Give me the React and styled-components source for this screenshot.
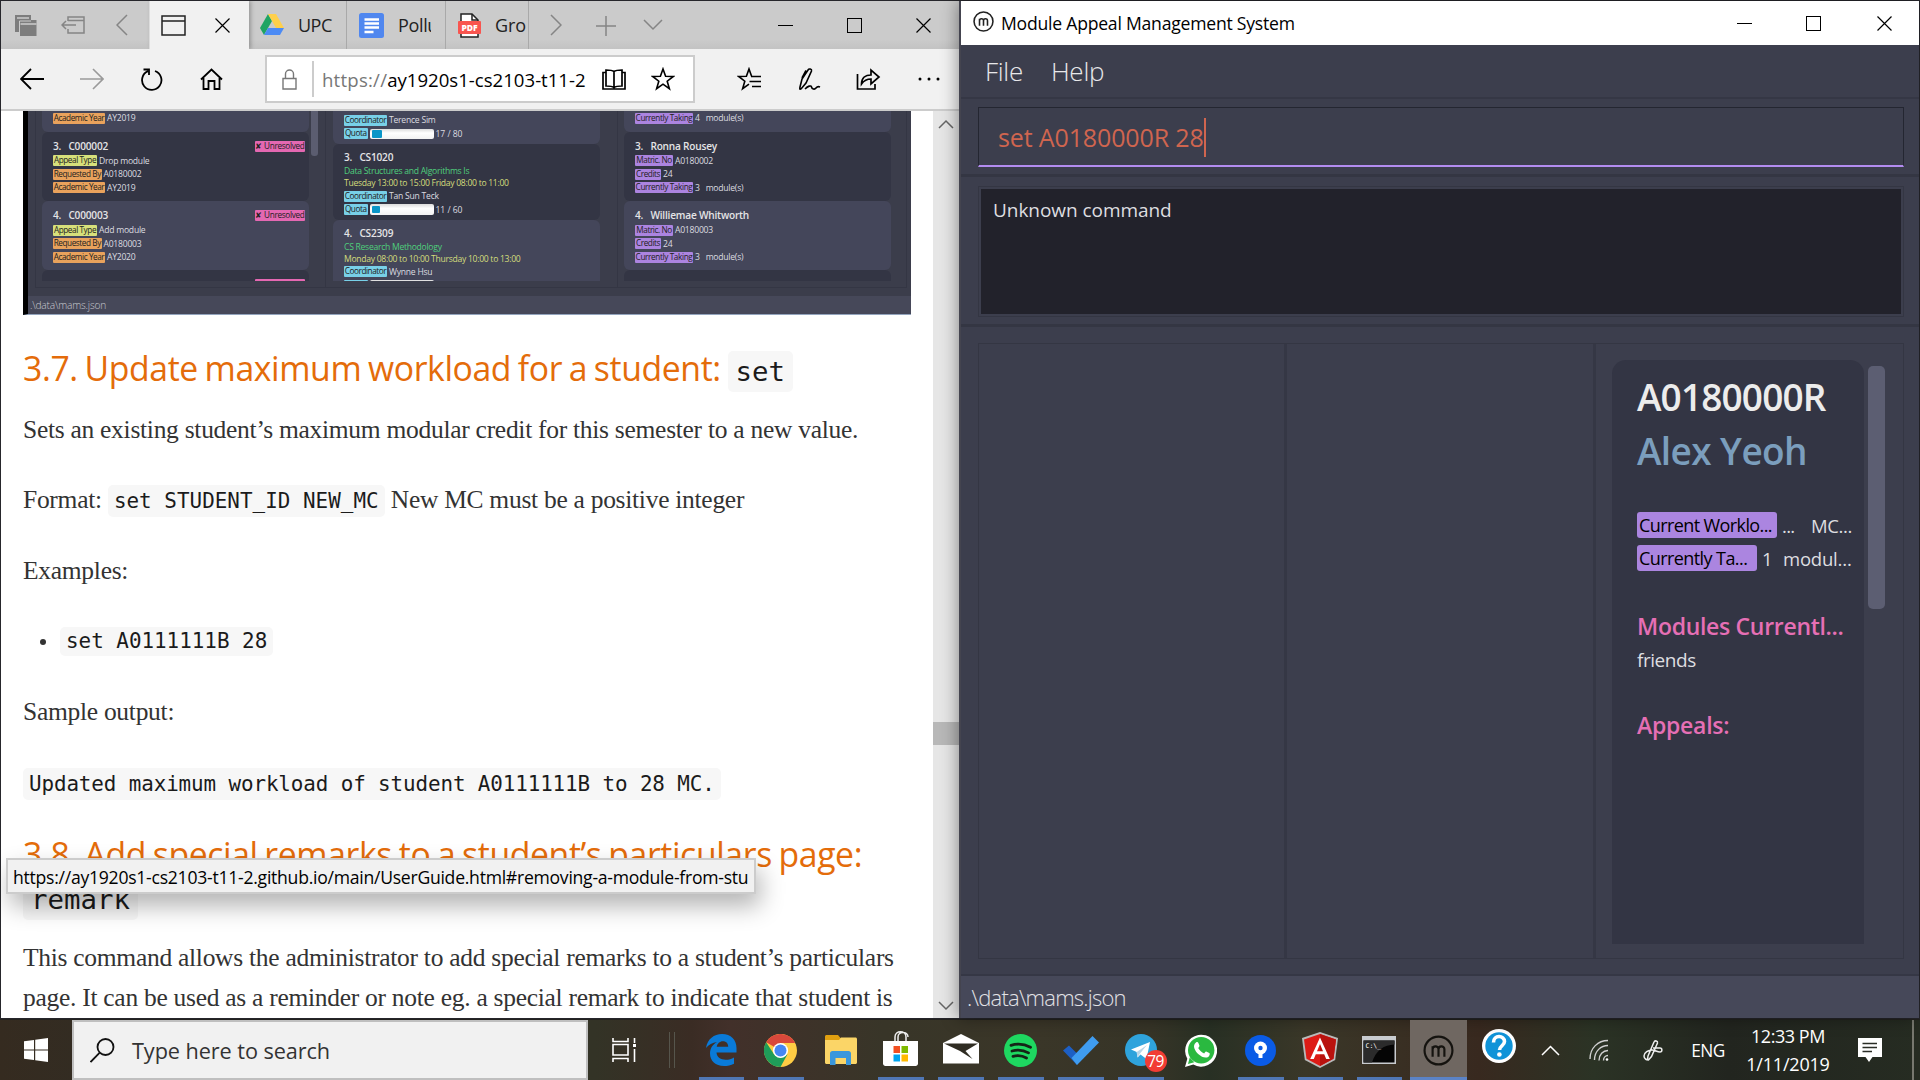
import React from "react";
import styled, { createGlobalStyle, css } from "styled-components";

const ui = `"Open Sans", "Noto Sans", sans-serif`;
const serif = `"Liberation Serif", serif`;
const mono = `"DejaVu Sans Mono", monospace`;

const Global = createGlobalStyle`
  * { box-sizing: border-box; }
  body { margin: 0; overflow: hidden; background: #1f1f24; font-family: ${ui}; }
  svg { display: block; flex: none; }
`;

/* ---------- shared ---------- */
const Desktop = styled.div`
  width: 1920px;
  height: 1080px;
  display: grid;
  grid-template: 1019px 61px / 959px 961px;
  background: #26262b;
  overflow: hidden;
`;
const Text = styled.span`
  font-family: ${ui};
  font-size: ${(p) => p.$size}px;
  font-weight: ${(p) => p.$weight || 400};
  letter-spacing: ${(p) => p.$ls || 0}px;
  line-height: ${(p) => (p.$lh ? p.$lh + "px" : "normal")};
  color: ${(p) => p.$color || "#000"};
  white-space: pre;
  flex: none;
`;
const Slot = styled.div`
  width: ${(p) => p.$w}px;
  height: 100%;
  display: flex;
  align-items: center;
  justify-content: ${(p) => (p.$start ? "flex-start" : "center")};
  flex: none;
`;
const Stroke = ({ w, h, c = "#000", s = 1.5, children, ...r }) => (
  <svg width={w} height={h} viewBox={`0 0 ${w} ${h}`} fill="none" stroke={c} strokeWidth={s} {...r}>
    {children}
  </svg>
);

/* ---------- browser ---------- */
const Browser = styled.section`
  margin: 1px 0 1px 1px;
  background: #fff;
  display: flex;
  flex-direction: column;
  min-width: 0;
  min-height: 0;
  overflow: hidden;
  position: relative;
`;
const TabBar = styled.div`
  height: 48px;
  flex: none;
  display: flex;
  background: linear-gradient(#cbcbcb 80%, #c3c3c3);
`;
const ActiveTab = styled.div`
  width: 100px;
  background: #f1f1f1;
  display: flex;
  align-items: center;
  padding-left: 11px;
  gap: 29px;
  border-left: 1px solid #ddd;
  box-shadow: 2px 0 4px rgba(0, 0, 0, 0.25);
`;
const Tab = styled.div`
  width: ${(p) => p.$w}px;
  padding-left: ${(p) => p.$pad}px;
  border-right: 1px solid #a9a9a9;
  display: flex;
  align-items: center;
  gap: 14px;
  overflow: hidden;
`;
const TabLabel = styled.div`
  width: ${(p) => p.$w}px;
  overflow: hidden;
  display: flex;
  flex: none;
`;
const ToolBar = styled.div`
  height: 62px;
  flex: none;
  display: flex;
  background: #f1f1f1;
  border-bottom: 2px solid #ccc;
`;
const Address = styled.div`
  width: 430px;
  height: 48px;
  margin: 6px 28px 0 15px;
  border: 2px solid #ccc;
  background: #fff;
  display: flex;
  align-items: center;
  flex: none;
`;
const AddressRule = styled.div`
  width: 2px;
  height: 36px;
  background: #ccc;
  margin-right: 8px;
`;
const Page = styled.div`
  flex: 1;
  display: flex;
  min-height: 0;
`;
const Article = styled.article`
  width: 932px;
  padding-left: 22px;
  overflow: hidden;
  flex: none;
`;
const ScrollBar = styled.div`
  width: 26px;
  background: #e6e6e6;
  display: flex;
  flex-direction: column;
  align-items: center;
  padding: 8px 0 7px;
`;
const ScrollThumb = styled.div`
  width: 26px;
  height: 23px;
  background: #b8b8b8;
  margin: 593px 0 auto;
`;
const H3 = styled.h3`
  margin: ${(p) => p.$top}px 0 20.7px;
  font: 400 33.75px/42px ${ui};
  letter-spacing: -0.38px;
  word-spacing: -1.7px;
  color: #e46c0a;
  white-space: nowrap;
`;
const Code = styled.code`
  font: ${(p) => (p.$big ? 27.4 : 20.9)}px/1 ${mono};
  letter-spacing: ${(p) => (p.$big ? 0 : p.$ls ?? 0)}px;
  word-spacing: 0;
  color: #1b1b1b;
  background: #f7f7f7;
  border-radius: 5px;
  padding: ${(p) => (p.$big ? "5px 8px" : "4px 6px 4px")};
`;
const P = styled.p`
  margin: 0 0 30.2px;
  font: 25.5px/40.4px ${serif};
  letter-spacing: -0.28px;
  color: #333;
  white-space: nowrap;
`;
const Bullet = styled(P)`
  height: 40.4px;
  display: flex;
  align-items: center;
  gap: 14px;
  padding-left: 17px;
  &::before {
    content: "";
    width: 6px;
    height: 6px;
    border-radius: 50%;
    background: #333;
  }
`;
const LinkStatus = styled.div`
  position: absolute;
  left: 5px;
  top: 857px;
  width: 750px;
  height: 36px;
  border: 2px solid #ccc;
  background: #f1f1f1;
  box-shadow: 4px 12px 24px rgba(0, 0, 0, 0.3);
  display: flex;
  align-items: center;
  padding: 2px 5px 0 5px;
`;
const LinkClip = styled.div`
  overflow: hidden;
  display: flex;
`;

/* ---------- guide illustration ---------- */
const Shot = styled.figure`
  margin: 0;
  width: 888px;
  height: 204px;
  border-left: 5px solid #000;
  border-bottom: 1px solid #93a4bd;
  background: #3b3d4b;
  display: flex;
  flex-direction: column;
`;
const ShotLists = styled.div`
  height: 177px;
  margin: 0 4px 8px 7px;
  border: 1px solid #343644;
  border-top: 0;
  display: grid;
  grid-template-columns: 290px 292px 1fr;
`;
const ShotPane = styled.div`
  height: 170px;
  overflow: hidden;
  display: flex;
  padding-left: ${(p) => p.$pad}px;
  gap: 2px;
`;
const ShotColumn = styled.div`
  border-right: ${(p) => (p.$last ? 0 : 1)}px solid #343644;
`;
const ShotStack = styled.div`
  width: 267px;
  display: flex;
  flex-direction: column;
`;
const ShotThumb = styled.div`
  width: 7px;
  height: 45px;
  border-radius: 0 0 3px 3px;
  background: #5b5d70;
`;
const ShotCard = styled.div`
  height: ${(p) => p.$h}px;
  flex: none;
  border-radius: 6px;
  background: ${(p) => (p.$dark ? "#333544" : "#44465a")};
  padding: ${(p) => p.$pt ?? 7}px 4px 0 11px;
  display: flex;
  flex-direction: column;
`;
const ShotCut = styled(ShotCard)`
  border-radius: 0 0 6px 6px;
`;
const ShotTitle = styled.div`
  height: 16px;
  display: flex;
  justify-content: space-between;
  align-items: center;
  flex: none;
`;
const ShotLine = styled.div`
  height: ${(p) => p.$h ?? 13.6}px;
  display: flex;
  align-items: center;
  gap: 2px;
  flex: none;
`;
const chip = { lime: "#d7e07b", orange: "#e9a25c", blue: "#78d0e8", violet: "#ac84e0", pink: "#e468b2" };
const Chip = styled.span`
  height: 11px;
  width: ${(p) => p.$w}px;
  border-radius: 1px;
  background: ${(p) => chip[p.$c]};
  font: 8.2px/10.6px ${ui};
  letter-spacing: ${(p) => p.$ls ?? -0.42}px;
  color: #222;
  display: flex;
  justify-content: center;
  white-space: pre;
  flex: none;
`;
const Quota = styled.div`
  width: 64px;
  height: 10.5px;
  border-radius: 2px;
  background: linear-gradient(#dcdcdc, #fff 40%, #f2f2f2);
  padding: 1.5px 2px;
`;
const QuotaFill = styled.div`
  width: ${(p) => p.$w}px;
  height: 7.5px;
  border-radius: 1px;
  background: #0a96c8;
`;
const ShotStatus = styled.div`
  height: 18px;
  background: #464859;
  padding-left: 2px;
  display: flex;
  align-items: center;
`;

const S = (p) => <Text $size={8.6} $color="#dcdce0" $ls={-0.24} {...p} />;
const Head = ({ n, t }) => (
  <Text $size={10.1} $weight={600} $color="#e4e4e6" $ls={-0.2}>{`${n}.   ${t}`}</Text>
);
const Appeal = ({ n, id, type, by, year, dark }) => (
  <ShotCard $h={69.3} $dark={dark} $pt={6.5}>
    <ShotTitle>
      <Head n={n} t={id} />
      <Chip $c="pink" $w={50} $ls={-0.3}>✘ Unresolved</Chip>
    </ShotTitle>
    <ShotLine><Chip $c="lime" $w={44}>Appeal Type</Chip><S>{type}</S></ShotLine>
    <ShotLine><Chip $c="orange" $w={48.5}>Requested By</Chip><S>{by}</S></ShotLine>
    <ShotLine><Chip $c="orange" $w={52}>Academic Year</Chip><S>{year}</S></ShotLine>
  </ShotCard>
);
const Module = ({ n, id, name, slot, who, fill, quota, dark }) => (
  <ShotCard $h={75.8} $dark={dark} $pt={4.8}>
    <ShotTitle><Head n={n} t={id} /></ShotTitle>
    <ShotLine $h={12.5}><S $color="#4fcf7c" $ls={-0.28}>{name}</S></ShotLine>
    <ShotLine $h={12}><S $color="#d3dc7c" $ls={-0.29}>{slot}</S></ShotLine>
    <ShotLine><Chip $c="blue" $w={43}>Coordinator</Chip><S>{who}</S></ShotLine>
    <ShotLine>
      <Chip $c="blue" $w={23.5}>Quota</Chip>
      <Quota><QuotaFill $w={fill} /></Quota>
      <S $ls={-0.05}>{quota}</S>
    </ShotLine>
  </ShotCard>
);
const Student = ({ n, name, id, taking, dark }) => (
  <ShotCard $h={69.3} $dark={dark} $pt={6.5}>
    <ShotTitle><Head n={n} t={name} /></ShotTitle>
    <ShotLine><Chip $c="violet" $w={38}>Matric. No</Chip><S>{id}</S></ShotLine>
    <ShotLine><Chip $c="violet" $w={26}>Credits</Chip><S>24</S></ShotLine>
    <ShotLine><Chip $c="violet" $w={58} $ls={-0.36}>Currently Taking</Chip><S>{`${taking}   module(s)`}</S></ShotLine>
  </ShotCard>
);

const Illustration = () => (
  <Shot>
    <ShotLists>
      <ShotColumn>
        <ShotPane $pad={6}>
          <ShotStack>
            <ShotCut $h={20.5} $pt={0.5}>
              <ShotLine><Chip $c="orange" $w={52}>Academic Year</Chip><S>AY2019</S></ShotLine>
            </ShotCut>
            <Appeal n={3} id="C000002" type="Drop module" by="A0180002" year="AY2019" dark />
            <Appeal n={4} id="C000003" type="Add module" by="A0180003" year="AY2020" />
            <ShotCard $h={69} $dark $pt={6}>
              <ShotTitle><span /><Chip $c="pink" $w={50} /></ShotTitle>
            </ShotCard>
          </ShotStack>
          <ShotThumb />
        </ShotPane>
      </ShotColumn>
      <ShotColumn>
        <ShotPane $pad={7}>
          <ShotStack>
            <ShotCut $h={33} $pt={2.4}>
              <ShotLine><Chip $c="blue" $w={43}>Coordinator</Chip><S>Terence Sim</S></ShotLine>
              <ShotLine>
                <Chip $c="blue" $w={23.5}>Quota</Chip>
                <Quota><QuotaFill $w={10} /></Quota>
                <S $ls={-0.05}>17 / 80</S>
              </ShotLine>
            </ShotCut>
            <Module n={3} id="CS1020" name="Data Structures and Algorithms Is" slot="Tuesday 13:00 to 15:00 Friday 08:00 to 11:00" who="Tan Sun Teck" fill={8} quota="11 / 60" dark />
            <ShotCard $h={75.8} $pt={4.8}>
              <ShotTitle><Head n={4} t="CS2309" /></ShotTitle>
              <ShotLine $h={12.5}><S $color="#4fcf7c" $ls={-0.28}>CS Research Methodology</S></ShotLine>
              <ShotLine $h={12}><S $color="#d3dc7c" $ls={-0.29}>Monday 08:00 to 10:00 Thursday 10:00 to 13:00</S></ShotLine>
              <ShotLine><Chip $c="blue" $w={43}>Coordinator</Chip><S>Wynne Hsu</S></ShotLine>
              <ShotLine><Chip $c="blue" $w={23.5} /><Quota /></ShotLine>
            </ShotCard>
          </ShotStack>
        </ShotPane>
      </ShotColumn>
      <ShotColumn $last>
        <ShotPane $pad={6}>
          <ShotStack>
            <ShotCut $h={20.5} $pt={0.5}>
              <ShotLine><Chip $c="violet" $w={58} $ls={-0.36}>Currently Taking</Chip><S>{"4   module(s)"}</S></ShotLine>
            </ShotCut>
            <Student n={3} name="Ronna Rousey" id="A0180002" taking="3" dark />
            <Student n={4} name="Williemae Whitworth" id="A0180003" taking="3" />
            <ShotCard $h={69} $dark />
          </ShotStack>
        </ShotPane>
      </ShotColumn>
    </ShotLists>
    <ShotStatus><Text $size={10.2} $weight={300} $color="#c9c9d0" $ls={-0.2}>.\data\mams.json</Text></ShotStatus>
  </Shot>
);

/* ---------- window buttons ---------- */
const Min = () => <Stroke w={15} h={15} s={1.3} shapeRendering="crispEdges"><path d="M0 7.5h15" /></Stroke>;
const Max = () => <Stroke w={15} h={15} s={1} shapeRendering="crispEdges"><path d="M.5 .5h14v14h-14z" /></Stroke>;
const Close = ({ w = 15 }) => <Stroke w={w} h={w} s={1.2}><path d={`M.5 .5L${w - 0.5} ${w - 0.5}M${w - 0.5} .5L.5 ${w - 0.5}`} /></Stroke>;

const BrowserWindow = () => (
  <Browser>
    <TabBar>
      <Slot $w={49}>
        <svg width="22" height="23" viewBox="0 0 22 23" fill="#7d7d7d">
          <path d="M0 1h16v5h5.500v16H5v-4H0z" />
          <path d="M2 4h12M5.500 10h16" stroke="#cbcbcb" strokeWidth="1.400" fill="none" />
          <path d="M4.500 18V7h11.500" stroke="#cbcbcb" strokeWidth="1" fill="none" />
        </svg>
      </Slot>
      <Slot $w={45}>
        <Stroke w={24} h={20} c="#858585"><path d="M7 6V2h16v16H7v-4M7 5.500h16M1 10h14M5 6l-4 4 4 4" /></Stroke>
      </Slot>
      <Slot $w={54}><Stroke w={12} h={22} c="#858585"><path d="M11 1L1 11l10 10" /></Stroke></Slot>
      <ActiveTab>
        <Stroke w={25} h={21} c="#222"><path d="M1 1h23v19H1zM1 6h23" /></Stroke>
        <Close />
      </ActiveTab>
      <Tab $w={98} $pad={11}>
        <svg width="24" height="22" viewBox="0 0 24 22">
          <path d="M8 0L0 14l4 7 8-14z" fill="#1fa463" />
          <path d="M8 0h8l8 14h-8z" fill="#ffd04b" />
          <path d="M8 14h16l-4 7H4z" fill="#4c8bf5" />
        </svg>
        <Text $size={18} $ls={-0.5} $color="#222">UPC</Text>
      </Tab>
      <Tab $w={99} $pad={12}>
        <svg width="25" height="25" viewBox="0 0 25 25">
          <rect width="25" height="25" rx="2.500" fill="#5087ef" />
          <path d="M5.500 6.500h14.500M5.500 10.500h14.500M5.500 14.500h14.500M5.500 19h9" stroke="#fff" strokeWidth="2.400" />
        </svg>
        <TabLabel $w={33}><Text $size={18} $ls={-0.35} $color="#222">Pollu</Text></TabLabel>
      </Tab>
      <Tab $w={83} $pad={12}>
        <svg width="23" height="25" viewBox="0 0 23 25">
          <path d="M3 1h11l6 6v17H3z" fill="#fff" stroke="#222" strokeWidth="1.500" />
          <path d="M14 1v6h6" fill="none" stroke="#222" strokeWidth="1.500" />
          <rect y="8" width="23" height="13" rx="1" fill="#f8554f" />
          <text x="11.500" y="17.800" textAnchor="middle" fontFamily="Open Sans" fontWeight="800" fontSize="8.500" fill="#fff">PDF</text>
        </svg>
        <TabLabel $w={33}><Text $size={18} $ls={-0.1} $color="#222">Gro</Text></TabLabel>
      </Tab>
      <Slot $w={53}><Stroke w={12} h={22} c="#858585"><path d="M1 1l10 10L1 21" /></Stroke></Slot>
      <Slot $w={48}><Stroke w={20} h={22} c="#858585"><path d="M10 2v20M0 12h20" /></Stroke></Slot>
      <Slot $w={46}><Stroke w={20} h={12} c="#858585"><path d="M1 1l9 9 9-9" /></Stroke></Slot>
      <Slot $w={75} />
      <Slot $w={69}><Min /></Slot>
      <Slot $w={69}><Max /></Slot>
      <Slot $w={69}><Close /></Slot>
    </TabBar>
    <ToolBar>
      <Slot $w={62}><Stroke w={24} h={22} s={1.8}><path d="M1 11h23M11 1L1 11l10 10" /></Stroke></Slot>
      <Slot $w={58}><Stroke w={24} h={22} s={1.6} c="#9a9a9a"><path d="M0 11h23M13 1l10 10-10 10" /></Stroke></Slot>
      <Slot $w={61}><Stroke w={22} h={23} s={1.8}><path d="M7 3.200A9.700 9.700 0 1 0 14 3M2.500 1.500H8v5.500" /></Stroke></Slot>
      <Slot $w={58}><Stroke w={23} h={22} s={1.8}><path d="M1 11.500L11.500 1.500 22 11.500M3.500 10v11h5v-8h6v8h5V10" /></Stroke></Slot>
      <Slot $w={10} />
      <Address>
        <Slot $w={45}>
          <Stroke w={15} h={21} c="#777" s={1.4}><path d="M1 9.500h13V20H1zM3.500 9.500V5a4 4 0 0 1 8 0v4.500" /></Stroke>
        </Slot>
        <AddressRule />
        <Slot $w={268} $start>
          <Text $size={18.6} $ls={0.22} $color="#777">https://</Text>
          <Text $size={18.6} $ls={0}>ay1920s1-cs2103-t11-2</Text>
        </Slot>
        <Slot $w={48}>
          <Stroke w={24} h={21} s={1.7}><path d="M12 2.500v16M12 2.500C10 1 7 1 4 1v16c3 0 6 0 8 1.500 2-1.500 5-1.500 8-1.500V1c-3 0-6 0-8 1.500M4 3.500H1V20h22V3.500h-3" /></Stroke>
        </Slot>
        <Slot $w={49}>
          <Stroke w={24} h={24} s={1.6}><path d="M12 2l2.600 7.300 7.700.2-6.100 4.700 2.200 7.500L12 17.200l-6.400 4.500 2.200-7.500L1.700 9.500l7.700-.2z" /></Stroke>
        </Slot>
      </Address>
      <Slot $w={52}>
        <Stroke w={25} h={24} s={1.6}><path d="M12 17.200l-6.400 4.500 2.200-7.500L1.700 9.500l7.700-.2L12 2l2.600 7.300M14 9.500h10M12.500 14.500H24M15 19.500h9" /></Stroke>
      </Slot>
      <Slot $w={67}>
        <Stroke w={24} h={25} s={1.6}><path d="M3 20L5 12 11 3c1-1.800 4-1 3.500 1L9 16l-5 6c-1 .8-1.500 0-1-2zM9 3.500L5 11M8 22c3-3 6-4 6.500-2s3 3 4.500 1 3-1.500 4-1" /></Stroke>
      </Slot>
      <Slot $w={52}>
        <Stroke w={25} h={22} s={1.7}><path d="M1.500 6v15H19v-5M5.500 16c0-6 4-9 9.500-9V2l8 7-8 7v-5c-4 0-7 1.500-9.500 5z" /></Stroke>
      </Slot>
      <Slot $w={69}>
        <svg width="24" height="4"><circle cx="3" cy="2" r="1.500" /><circle cx="12" cy="2" r="1.500" /><circle cx="21" cy="2" r="1.500" /></svg>
      </Slot>
    </ToolBar>
    <Page>
      <Article>
        <Illustration />
        <H3 $top={32}>3.7. Update maximum workload for a student: <Code $big>set</Code></H3>
        <P>Sets an existing student’s maximum modular credit for this semester to a new value.</P>
        <P>Format: <Code $ls={0.03}>set STUDENT_ID NEW_MC</Code> New MC must be a positive integer</P>
        <P>Examples:</P>
        <Bullet as="div"><Code>set A0111111B 28</Code></Bullet>
        <P>Sample output:</P>
        <P><Code $ls={-0.11}>Updated maximum workload of student A0111111B to 28 MC.</Code></P>
        <H3 $top={30}>3.8. Add special remarks to a student’s particulars page:<br /><Code $big>remark</Code></H3>
        <P>This command allows the administrator to add special remarks to a student’s particulars<br />page. It can be used as a reminder or note eg. a special remark to indicate that student is</P>
      </Article>
      <ScrollBar>
        <Stroke w={16} h={10} c="#666"><path d="M1 9l7-7 7 7" /></Stroke>
        <ScrollThumb />
        <Stroke w={16} h={10} c="#666"><path d="M1 1l7 7 7-7" /></Stroke>
      </ScrollBar>
    </Page>
    <LinkStatus>
      <LinkClip><Text $size={17.6} $ls={-0.26}>https://ay1920s1-cs2103-t11-2.github.io/main/UserGuide.html#removing-a-module-from-stu</Text></LinkClip>
    </LinkStatus>
  </Browser>
);

/* ---------- MAMS application ---------- */
const Mams = styled.section`
  margin: 1px 1px 1px 2px;
  background: #3c3e4d;
  display: flex;
  flex-direction: column;
  min-height: 0;
  position: relative;
  box-shadow: -2px 0 0 #44444f, -3px 0 16px rgba(0, 0, 0, 0.4);
`;
const TitleBar = styled.header`
  height: 44px;
  flex: none;
  background: #fff;
  display: flex;
  align-items: center;
  padding-left: 12px;
`;
const TitleIcon = styled.div`
  padding-bottom: 3px;
`;
const TitleText = styled.div`
  flex: 1;
  padding: 0 0 0 7px;
  display: flex;
`;
const MenuBar = styled.nav`
  height: 54px;
  flex: none;
  display: flex;
  align-items: center;
  gap: 28px;
  padding: 0 0 1px 24px;
  border-bottom: 2px solid #353745;
`;
const CommandPane = styled.div`
  height: 78px;
  flex: none;
  padding: 8px 15px 0 17px;
  border-bottom: 3px solid #343643;
`;
const CommandField = styled.div`
  height: 60px;
  border: 1px solid #242631;
  border-bottom: 2px solid #b38cf0;
  display: flex;
  align-items: center;
  padding: 1px 0 0 19px;
`;
const Caret = styled.div`
  width: 2px;
  height: 39px;
  background: #d0654f;
`;
const ResultPane = styled.div`
  height: 150px;
  flex: none;
  padding: 9px 15px 0 17px;
  border-bottom: 3px solid #343643;
`;
const ResultBox = styled.div`
  height: 131px;
  border: 1px solid #343643;
  padding: 2px;
`;
const Result = styled.div`
  height: 125px;
  background: #22222b;
  padding: 8px 12px;
`;
const Panels = styled.div`
  height: 616px;
  flex: none;
  margin: 16px 15px 0 17px;
  border: 1px solid #343643;
  display: grid;
  grid-template-columns: 308px 309px 1fr;
`;
const Panel = styled.div`
  border-right: ${(p) => (p.$last ? 0 : 3)}px solid #353745;
  display: flex;
`;
const Card = styled.div`
  width: 252px;
  height: 584px;
  margin: 16px 4px 0 16px;
  border-radius: 14px 14px 0 0;
  background: #333544;
  padding: 11px 0 0 25px;
  display: flex;
  flex-direction: column;
`;
const CardLine = styled.div`
  height: ${(p) => p.$h}px;
  margin-top: ${(p) => p.$mt || 0}px;
  display: flex;
  align-items: center;
  flex: none;
`;
const Badge = styled.div`
  width: ${(p) => p.$w}px;
  height: 26px;
  border-radius: 3px;
  background: #ab85e0;
  padding-left: 2px;
  margin-right: ${(p) => p.$mr}px;
  display: flex;
  align-items: center;
`;
const CardValue = styled.div`
  width: ${(p) => p.$w}px;
  display: flex;
`;
const PanelThumb = styled.div`
  width: 17px;
  height: 243px;
  margin-top: 22px;
  border-radius: 5px;
  background: #5c5e72;
`;
const StatusBar = styled.footer`
  flex: 1;
  margin-top: 15px;
  border-top: 2px solid #353745;
  background: #464859;
  padding: 0 0 0 6px;
  display: flex;
  align-items: center;
`;
const MLogo = ({ size, color = "#222", s = 1.6 }) => (
  <Stroke w={20} h={20} c={color} s={s} width={size} height={size}>
    <circle cx="10" cy="10" r="9" />
    <path d="M6.200 14V7.300M6.200 9.200c0-2.300 3.800-2.600 3.800 0V14M10 9.200c0-2.300 3.800-2.600 3.800 0V14" />
  </Stroke>
);

const MamsWindow = () => (
  <Mams>
    <TitleBar>
      <TitleIcon><MLogo size={21} s={1.5} /></TitleIcon>
      <TitleText><Text $size={17.6} $ls={-0.23}>Module Appeal Management System</Text></TitleText>
      <Slot $w={66}><Min /></Slot>
      <Slot $w={72}><Max /></Slot>
      <Slot $w={70}><Close /></Slot>
    </TitleBar>
    <MenuBar>
      <Text $size={26} $weight={300} $ls={-0.3} $color="#e8e8ea">File</Text>
      <Text $size={26} $weight={300} $ls={-0.25} $color="#e8e8ea">Help</Text>
    </MenuBar>
    <CommandPane>
      <CommandField>
        <Text $size={25} $ls={-0.13} $color="#d0654f">set A0180000R 28</Text>
        <Caret />
      </CommandField>
    </CommandPane>
    <ResultPane>
      <ResultBox><Result><Text $size={19} $ls={-0.05} $color="#dedee0">Unknown command</Text></Result></ResultBox>
    </ResultPane>
    <Panels>
      <Panel />
      <Panel />
      <Panel $last>
        <Card>
          <CardLine $h={50}><Text $size={37} $weight={600} $ls={-0.85} $color="#ececec">A0180000R</Text></CardLine>
          <CardLine $h={50} $mt={4}><Text $size={37} $weight={600} $ls={-0.6} $color="#7b9ebd">Alex Yeoh</Text></CardLine>
          <CardLine $h={26} $mt={37}>
            <Badge $w={140} $mr={5}><Text $size={18} $ls={-0.6}>Current Worklo...</Text></Badge>
            <CardValue $w={29}><Text $size={18.5} $ls={-0.7} $color="#dedee0">...</Text></CardValue>
            <Text $size={18.5} $ls={-0.4} $color="#dedee0">MC...</Text>
          </CardLine>
          <CardLine $h={26} $mt={7}>
            <Badge $w={120} $mr={5}><Text $size={18} $ls={-0.58}>Currently Ta...</Text></Badge>
            <CardValue $w={21}><Text $size={18.5} $color="#dedee0">1</Text></CardValue>
            <Text $size={18.5} $ls={-0.2} $color="#dedee0">modul...</Text>
          </CardLine>
          <CardLine $h={32} $mt={39}><Text $size={23} $weight={600} $ls={-0.3} $color="#e66fb5">Modules Currentl...</Text></CardLine>
          <CardLine $h={26} $mt={5}><Text $size={19} $ls={-0.45} $color="#dedee0">friends</Text></CardLine>
          <CardLine $h={32} $mt={36}><Text $size={23} $weight={600} $ls={-0.25} $color="#e66fb5">Appeals:</Text></CardLine>
        </Card>
        <PanelThumb />
      </Panel>
    </Panels>
    <StatusBar><Text $size={22} $weight={300} $ls={-0.77} $color="#e2e2e6">.\data\mams.json</Text></StatusBar>
  </Mams>
);

/* ---------- task bar ---------- */
const TaskBar = styled.footer`
  grid-column: 1 / -1;
  border-top: 1px solid #23221f;
  display: flex;
  background: linear-gradient(90deg, #352b20 0, #332c22 4%, #333326 31%, #3a2c24 36%, #42302a 38%, #383528 46%, #3a3628 54%, #363427 60%, #283024 63%, #3a3728 68%, #38291f 77%, #2b3325 83%, #22251f 90%, #262c22 100%);
`;
const Search = styled.div`
  width: 516px;
  border: 2px solid #bfbfbf;
  background: #f1f1f1;
  display: flex;
  align-items: center;
  padding: 1px 0 0 16px;
  gap: 17px;
`;
const Task = styled.div`
  width: ${(p) => p.$w || 60}px;
  display: flex;
  flex-direction: column;
  align-items: center;
  justify-content: center;
  position: relative;
  flex: none;
  ${(p) => p.$active && css`
    background: #6f6761;
    margin-left: 1.5px;
  `}
  ${(p) => p.$open && css`
    &::after {
      content: "";
      position: absolute;
      bottom: 0;
      left: ${p.$active ? 0 : 7}px;
      right: ${p.$active ? 0 : 7}px;
      height: 3px;
      background: ${p.$active ? "#5b83c6" : "#5077b5"};
    }
  `}
`;
const Count = styled.div`
  position: absolute;
  left: 34px;
  top: 30px;
  width: 22px;
  height: 22px;
  border-radius: 50%;
  background: #f23c34;
  display: flex;
  align-items: center;
  justify-content: center;
`;
const Separator = styled.div`
  width: 6px;
  height: 36px;
  margin: 12px 16.5px 0 9px;
  border: solid #56554c;
  border-width: 0 1px;
  flex: none;
`;
const Clock = styled.div`
  width: 92px;
  display: flex;
  flex-direction: column;
  align-items: center;
  justify-content: center;
  gap: 3px;
  flex: none;
`;
const ShowDesktop = styled.div`
  width: 8px;
  border-left: 2px solid #77786f;
  margin-left: auto;
`;

const WindowsTaskBar = () => (
  <TaskBar>
    <Slot $w={72}>
      <svg width="24" height="24" viewBox="0 0 24 24" fill="#fff"><path d="M0 3.300L10 2v9.500H0zM11.200 1.800L24 0v11.500H11.200zM0 12.600h10V22L0 20.700zM11.200 12.600H24V24l-12.800-1.800z" /></svg>
    </Slot>
    <Search>
      <Stroke w={25} h={26} c="#111" s={1.8}><circle cx="15.500" cy="9" r="8" /><path d="M9.500 14.800L.5 24" /></Stroke>
      <Text $size={21.7} $ls={-0.08} $color="#333">Type here to search</Text>
    </Search>
    <Slot $w={72}>
      <Stroke w={25} h={24} c="#fff" s={1.6}><path d="M1 0v3.500h15V0M1 6.500h15v10.500H1zM1 24v-3.500h15V24M22.500 0v5M22.500 11v13" /><path d="M21 7.500h3" strokeWidth="3" /></Stroke>
    </Slot>
    <Separator />
    <Task $w={59} $open>
      <svg width="31" height="32" viewBox="0 0 31 32"><path d="M0 14C1.500 5 8 0 16 0c9 0 14.500 6 14.500 14v4.500H10.500c.3 5 4.500 7.200 9 7.200 3.500 0 6-.9 8.500-2.300v6.300c-3 1.600-6.500 2.300-10 2.300C9.500 32 4 27 4 19.500 4 14.500 6.500 10.500 11 8 6.500 8.500 2.500 10.500 0 14zM10.700 12.800h11.500c0-3.500-2-5.600-5.300-5.600s-5.600 2.300-6.200 5.600z" fill="#0a7ad8" /></svg>
    </Task>
    <Task $open>
      <svg width="33" height="33" viewBox="0 0 33 33">
        <circle cx="16.500" cy="16.500" r="16.500" fill="#fc4" />
        <path d="M16.500 16.500L2.200 8.250A16.500 16.500 0 0 1 30.800 8.250L31 9H16.500z" fill="#d9483b" />
        <path d="M2.200 8.250A16.500 16.500 0 0 0 16.500 33l7-12.700-7 3.700-6.500-3.700z" fill="#1f9d59" />
        <circle cx="16.500" cy="16.500" r="7.600" fill="#fff" /><circle cx="16.500" cy="16.500" r="6" fill="#4587f3" />
      </svg>
    </Task>
    <Task>
      <svg width="32" height="30" viewBox="0 0 32 30"><path d="M0 1.500C0 .7.700 0 1.500 0H13l2.500 3H30v6H0z" fill="#e0a010" /><path d="M0 5h14l2-2.500h14.500c.8 0 1.500.7 1.500 1.500v23.500c0 .8-.7 1.500-1.500 1.500h-29C.7 29 0 28.300 0 27.500z" fill="#fbd567" /><path d="M5 30V18.500C5 17 6 16 7.500 16h16c1.500 0 2.500 1 2.500 2.500V30h-5v-7H10.500v7z" fill="#3a97dc" /></svg>
    </Task>
    <Task $open>
      <svg width="35" height="38" viewBox="0 0 35 38"><path d="M12 11V6c0-7 11-7 11 0v5M15 10V6c0-6 10-6 10 0" fill="none" stroke="#eee" strokeWidth="1.500" /><path d="M0 10h35v22.500c0 1.400-1.100 2.500-2.500 2.500h-30C1.100 35 0 33.900 0 32.500z" fill="#fff" /><path d="M10.500 15h6.500v7h-6.500z" fill="#f25022" /><path d="M18.500 15H25v7h-6.500z" fill="#7fba00" /><path d="M10.500 23.500h6.500v7h-6.500z" fill="#00a4ef" /><path d="M18.500 23.500H25v7h-6.500z" fill="#ffb900" /></svg>
    </Task>
    <Task $open>
      <svg width="36" height="32" viewBox="0 0 36 32"><path d="M0 9L18 0l18 9v20.500H0z" fill="#fff" /><path d="M1 9.500h34L22.500 17l7 8L17 17z" fill="#2f2c22" /></svg>
    </Task>
    <Task $open>
      <svg width="33" height="33" viewBox="0 0 33 33"><circle cx="16.500" cy="16.500" r="16.500" fill="#1ed760" /><path d="M7 11.300c6.500-2 13.500-1.300 19.500 2M8 17c5.500-1.600 11.500-1 16.500 1.900M9 22.300c4.500-1.200 9.300-.8 13.500 1.700" fill="none" stroke="#152317" strokeWidth="2.800" strokeLinecap="round" /></svg>
    </Task>
    <Task $open>
      <svg width="36" height="29" viewBox="0 0 36 29"><path d="M0 14.500L6 9.500l10 10L14 29z" fill="#1d5fc4" /><path d="M8.500 22L29.500 0 36 6.500 14 29z" fill="#3f9cf0" /></svg>
    </Task>
    <Task $open>
      <svg width="32" height="32" viewBox="0 0 32 32"><circle cx="16" cy="16" r="16" fill="#2fa3dc" /><path d="M6 15.500L25 8l-3.500 17-6-4.500-3 3-.8-5.500z" fill="#fff" /><path d="M11.700 18L22 11l-7 8.500-2.500 4z" fill="#b9d6e8" /></svg>
      <Count><Text $size={15.5} $ls={-0.6} $color="#fff">79</Text></Count>
    </Task>
    <Task>
      <svg width="32" height="33" viewBox="0 0 32 33"><path d="M0 33l2.300-8.300A16 16 0 1 1 8.300 30.600z" fill="#fff" /><circle cx="16.200" cy="16.200" r="13.200" fill="#2ab940" /><path d="M3 30l1.700-6.500 4.600 4.800z" fill="#2ab940" /><path d="M11 8.500c1-.8 2-.5 2.400.5l1 2.600c.2.700-.1 1.200-1.200 2.500 1.500 2.700 3.400 4.300 6 5.300 1.200-1.500 1.600-2 2.400-1.700l2.800 1.400c.8.500.2 2.700-.9 3.600-3 2-6.800.3-10-2.500-3.600-3.300-6.600-8.600-2.500-11.700z" fill="#fff" /></svg>
    </Task>
    <Task $open>
      <svg width="31" height="31" viewBox="0 0 31 31"><circle cx="15.500" cy="15.500" r="15.500" fill="#0a5be6" /><circle cx="15.500" cy="13" r="6.500" fill="#fff" /><circle cx="15.500" cy="13" r="2.200" fill="#0a5be6" /><path d="M13.500 17h4v6h-4z" fill="#fff" /></svg>
    </Task>
    <Task $w={59} $open>
      <svg width="36" height="36" viewBox="0 0 36 36"><path d="M18 0l18 6-2.800 22L18 36 2.800 28 0 6z" fill="#b9b9b9" /><path d="M18 2l16 5.400-2.500 19.400L18 34 4.500 26.800 2 7.400z" fill="#dd1b16" /><path d="M18 2l16 5.400-2.500 19.400L18 34z" fill="#b9120e" /><path d="M18 5.500L8.200 27h3.600l2-4.800h8.400l2 4.800h3.600zm0 6.500l3 7.200h-6z" fill="#fff" /></svg>
    </Task>
    <Task $w={59} $open>
      <svg width="34" height="28" viewBox="0 0 34 28"><path d="M0 0h34v28H0z" fill="#c9ccd0" /><path d="M1.500 4.500h31v22h-31z" fill="#050505" /><path d="M1.500 4.500h31v4C22 9 14 14 10 26.500H1.500z" fill="#2b2b2b" /><text x="3.500" y="11.500" fontFamily="DejaVu Sans Mono" fontSize="6.500" fill="#fff">C:\_</text></svg>
    </Task>
    <Task $w={57} $active $open><MLogo size={31} color="#15130f" s={1.4} /></Task>
    <Slot $w={64}>
      <svg width="34" height="42" viewBox="0 0 34 42"><circle cx="17" cy="17" r="17" fill="#fff" /><circle cx="17" cy="17" r="13.700" fill="#0f93d8" /><path d="M11.500 13.500c0-8 11-7.500 11-1 0 4-5 4.500-5 8.500" fill="none" stroke="#fff" strokeWidth="3.600" /><circle cx="17.400" cy="25.500" r="2.300" fill="#fff" /></svg>
    </Slot>
    <Slot $w={38}><Stroke w={19} h={11} c="#fff" s={1.5}><path d="M1 10l8.500-8.500L18 10" /></Stroke></Slot>
    <Slot $w={59}>
      <Stroke w={20} h={22} c="#cfcfcf" s={1.4}><path d="M1 20C1 9 9 1.500 19 1.500" /><path d="M5.500 21C5.500 12 12 6.500 19 6.500M10 21.500c0-6 4-10 9-10M14.500 21.500c0-3 2-5 4.500-5" /><circle cx="18" cy="20.500" r="1.300" fill="#fff" stroke="none" /></Stroke>
    </Slot>
    <Slot $w={48}>
      <Stroke w={21} h={23} c="#eee" s={1.5}><path d="M6 17L12 3c.8-2 4-1 3.500 1L9.500 17.500 6.500 21c-1 .5-1-1-.5-4zM11 9h7c2.500 0 2.500 4 0 4-3 0-5-2-8-2-3.500 0-8 2.500-8 6 0 3 3 4.500 5 3.500" /></Stroke>
    </Slot>
    <Slot $w={9} />
    <Slot $w={46}><Text $size={17.3} $ls={-0.5} $color="#fff">ENG</Text></Slot>
    <Slot $w={11} />
    <Clock>
      <Text $size={18} $ls={-0.46} $lh={25} $color="#fff">12:33 PM</Text>
      <Text $size={18} $ls={-0.2} $lh={25} $color="#fff">1/11/2019</Text>
    </Clock>
    <Slot $w={71}>
      <svg width="24" height="24" viewBox="0 0 24 24"><path d="M0 0h24v19h-9.500L11 24l-3.500-5H0z" fill="#fff" /><path d="M4.500 5.500h14.500M4.500 9.500h14.500M4.500 13.500h9.500" stroke="#2a2d26" strokeWidth="1.300" /></svg>
    </Slot>
    <ShowDesktop />
  </TaskBar>
);

export default function App() {
  return (
    <>
      <Global />
      <Desktop>
        <BrowserWindow />
        <MamsWindow />
        <WindowsTaskBar />
      </Desktop>
    </>
  );
}
